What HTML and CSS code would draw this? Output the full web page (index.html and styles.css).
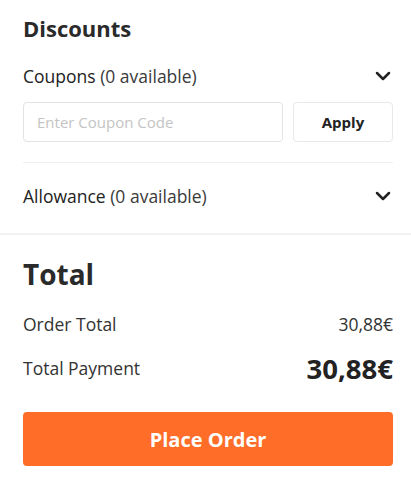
FILE: index.html
```html
<!DOCTYPE html>
<html>
<head>
<meta charset="utf-8">
<link rel="stylesheet" href="styles.css">
</head>
<body>
<div class="panel">
  <section class="discounts">
    <h2 class="title">Discounts</h2>
    <div class="row-toggle">
      <span class="label"><span class="name">Coupons</span> (0 available)</span>
      <svg class="chev" width="16" height="10" viewBox="0 0 16 10"><path d="M2 2 L8 8 L14 2" fill="none" stroke="#222" stroke-width="2.5" stroke-linecap="round" stroke-linejoin="round"/></svg>
    </div>
    <div class="coupon-form">
      <input class="coupon-input" type="text" placeholder="Enter Coupon Code">
      <button class="apply-btn">Apply</button>
    </div>
    <div class="divider"></div>
    <div class="row-toggle allowance">
      <span class="label"><span class="name">Allowance</span> (0 available)</span>
      <svg class="chev" width="16" height="10" viewBox="0 0 16 10"><path d="M2 2 L8 8 L14 2" fill="none" stroke="#222" stroke-width="2.5" stroke-linecap="round" stroke-linejoin="round"/></svg>
    </div>
  </section>
  <section class="total">
    <h2 class="title big">Total</h2>
    <div class="line">
      <span>Order Total</span>
      <span>30,88€</span>
    </div>
    <div class="line pay">
      <span>Total Payment</span>
      <span class="amount">30,88€</span>
    </div>
    <button class="place-btn">Place Order</button>
  </section>
</div>
</body>
</html>
```

FILE: styles.css
```css
* { box-sizing: border-box; }
html, body { margin: 0; padding: 0; background: #fff; }
body {
  font-family: "Open Sans", "Noto Sans", sans-serif;
  color: #333;
  width: 411px;
}
.panel { display: flex; flex-direction: column; }
.discounts {
  padding: 12px 18px 0 23px;
  border-bottom: 2px solid #f2f2f2;
}
.title {
  margin: 0;
  font-size: 22px;
  font-weight: 700;
  color: #2a2a2a;
  line-height: 32px;
}
.row-toggle {
  display: flex;
  justify-content: space-between;
  align-items: center;
  margin-top: 19px;
  height: 26px;
  font-size: 17.5px;
  color: #3a3a3a;
}
.row-toggle .name { color: #222; font-weight: 500; }
.chev { margin-right: 2px; }
.coupon-form {
  display: flex;
  gap: 10px;
  margin-top: 13px;
}
.coupon-input {
  width: 260px;
  height: 40px;
  border: 1px solid #e3e3e3;
  border-radius: 4px;
  padding: 0 13px;
  font-family: inherit;
  font-size: 15px;
  color: #333;
  outline: none;
}
.coupon-input::placeholder { color: #c4c4c4; }
.apply-btn {
  width: 100px;
  height: 40px;
  border: 1px solid #e8e8e8;
  border-radius: 4px;
  background: #fff;
  font-family: inherit;
  font-weight: 700;
  font-size: 15px;
  color: #222;
}
.divider {
  height: 1px;
  background: #efefef;
  margin-top: 20px;
}
.allowance { margin-top: 20px; margin-bottom: 24px; }
.total {
  padding: 19px 18px 0 23px;
}
.title.big { font-size: 28px; line-height: 40px; }
.line {
  display: flex;
  justify-content: space-between;
  align-items: center;
  font-size: 17.5px;
  color: #333;
  margin-top: 17px;
  height: 26px;
}
.line.pay { margin-top: 11px; height: 40px; }
.amount { font-size: 27.5px; font-weight: 700; color: #222; }
.place-btn {
  margin-top: 24px;
  width: 370px;
  height: 54px;
  border: none;
  border-radius: 4px;
  background: #ff6d28;
  color: #fff;
  font-family: inherit;
  font-weight: 700;
  font-size: 20px;
}
```
